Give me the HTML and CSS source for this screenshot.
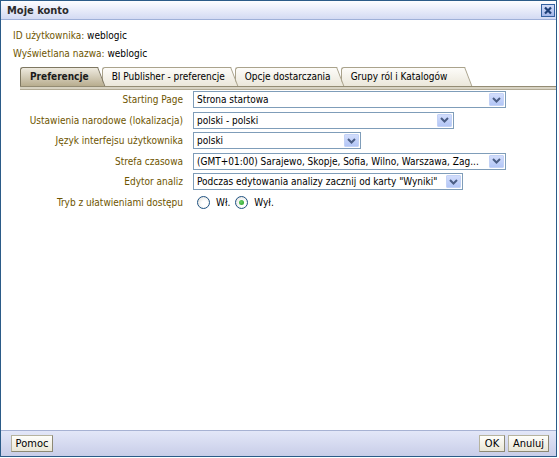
FILE: index.html
```html
<!DOCTYPE html>
<html lang="pl">
<head>
<meta charset="utf-8">
<title>Moje konto</title>
<link rel="stylesheet" href="styles.css">
</head>
<body>
<div class="window">
  <div class="titlebar">
    <span class="title">Moje konto</span>
    <span class="close"><svg width="12" height="11" viewBox="0 0 12 11"><path d="M3 2.5 L9 8.5 M9 2.5 L3 8.5" stroke="#1d3f78" stroke-width="2.2" fill="none"/></svg></span>
  </div>
  <div class="body">
    <div class="info">
      <div class="info-row"><span class="lbl">ID użytkownika:</span> <span class="val">weblogic</span></div>
      <div class="info-row"><span class="lbl">Wyświetlana nazwa:</span> <span class="val">weblogic</span></div>
    </div>
    <div class="tabs">
      <div class="tab tab-1 active">Preferencje</div>
      <div class="tab tab-2">BI Publisher - preferencje</div>
      <div class="tab tab-3">Opcje dostarczania</div>
      <div class="tab tab-4">Grupy ról i Katalogów</div>
    </div>
    <div class="tabline"></div>
    <div class="form">
      <label>Starting Page</label>
      <div class="select w-313"><span class="sel-text">Strona startowa</span><span class="arrow"><svg width="9" height="6" viewBox="0 0 9 6"><path d="M1 1 L4.5 4.5 L8 1" stroke="#4a5d84" stroke-width="2" fill="none"/></svg></span></div>

      <label>Ustawienia narodowe (lokalizacja)</label>
      <div class="select w-261"><span class="sel-text">polski - polski</span><span class="arrow"><svg width="9" height="6" viewBox="0 0 9 6"><path d="M1 1 L4.5 4.5 L8 1" stroke="#4a5d84" stroke-width="2" fill="none"/></svg></span></div>

      <label>Język interfejsu użytkownika</label>
      <div class="select w-168"><span class="sel-text">polski</span><span class="arrow"><svg width="9" height="6" viewBox="0 0 9 6"><path d="M1 1 L4.5 4.5 L8 1" stroke="#4a5d84" stroke-width="2" fill="none"/></svg></span></div>

      <label>Strefa czasowa</label>
      <div class="select w-313"><span class="sel-text">(GMT+01:00) Sarajewo, Skopje, Sofia, Wilno, Warszawa, Zag...</span><span class="arrow"><svg width="9" height="6" viewBox="0 0 9 6"><path d="M1 1 L4.5 4.5 L8 1" stroke="#4a5d84" stroke-width="2" fill="none"/></svg></span></div>

      <label>Edytor analiz</label>
      <div class="select w-270"><span class="sel-text">Podczas edytowania analizy zacznij od karty "Wyniki"</span><span class="arrow"><svg width="9" height="6" viewBox="0 0 9 6"><path d="M1 1 L4.5 4.5 L8 1" stroke="#4a5d84" stroke-width="2" fill="none"/></svg></span></div>

      <label class="radio-label">Tryb z ułatwieniami dostępu</label>
      <div class="radios">
        <span class="radio"></span><span class="radio-text">Wł.</span>
        <span class="radio checked"></span><span class="radio-text">Wył.</span>
      </div>
    </div>
  </div>
  <div class="footer">
    <button class="btn btn-help">Pomoc</button>
    <div class="footer-right">
      <button class="btn btn-ok">OK</button>
      <button class="btn btn-cancel">Anuluj</button>
    </div>
  </div>
</div>
</body>
</html>
```

FILE: styles.css
```css
* { box-sizing: border-box; }
html, body { margin: 0; background: #ffffff; }
body {
  font-family: "DejaVu Sans Condensed", "Liberation Sans", sans-serif;
  font-size: 10px;
  color: #000;
}
.window {
  width: 557px;
  height: 457px;
  border: 1px solid #2b5b88;
  display: flex;
  flex-direction: column;
  background: #fff;
}
.titlebar {
  flex: none;
  height: 19px;
  border-bottom: 1px solid #9fb0d8;
  background: linear-gradient(#fdfdff, #d3daf3);
  display: flex;
  align-items: center;
  justify-content: space-between;
  padding: 0 1px 0 6px;
}
.title { font-weight: bold; color: #2b2b2b; font-size: 11px; }
.close {
  width: 14px;
  height: 13px;
  border: 1px solid #3461a0;
  background: linear-gradient(#d3ddf8, #a3b6e8);
  display: flex;
  align-items: center;
  justify-content: center;
}
.close svg { display: block; }
.body { flex: 1; }
.info { padding: 7px 0 0 12px; }
.info-row { height: 18px; line-height: 18px; white-space: nowrap; }
.lbl { color: #6e5500; }

.tabs {
  display: flex;
  margin: 4px 0 0 19px;
  height: 19px;
}
.tab {
  position: relative;
  height: 19px;
  line-height: 19px;
  padding: 0 5px 0 10px;
  margin-right: 5px;
  white-space: nowrap;
  color: #000;
}
.tab::before {
  content: "";
  position: absolute;
  left: 0; right: 0; top: 0; bottom: 0;
  border-top: 1px solid #aaa38c;
  border-left: 1px solid #aaa38c;
  border-radius: 3px 0 0 0;
  background: linear-gradient(#fdfcf9, #ebe7da);
  z-index: -1;
}
.tab::after {
  content: "";
  position: absolute;
  top: 0; bottom: 0;
  left: calc(100% - 10px);
  width: 10px;
  border-top: 1px solid #aaa38c;
  border-right: 1px solid #aaa38c;
  background: linear-gradient(#fdfcf9, #ebe7da);
  transform: skewX(21deg);
  transform-origin: 0 0;
  z-index: -1;
}
.tab-1 { z-index: 5; padding-right: 8px; }
.tab-2 { z-index: 3; }
.tab-3 { z-index: 2; }
.tab-4 { z-index: 1; padding-right: 17px; }
.tab.active { font-weight: bold; color: #1a1a1a; }
.tab.active::before,
.tab.active::after {
  border-color: #7e7761;
  background: linear-gradient(#eeeadf, #b8ad8f);
}
.tabline {
  margin-left: 19px;
  height: 4px;
  border-top: 1px solid #948c74;
  border-bottom: 1px solid #b2ab96;
  background: #d8d3c3;
}

.form {
  display: grid;
  grid-template-columns: 182px 1fr;
  column-gap: 10px;
  row-gap: 3.5px;
  padding-top: 1px;
}
.form label {
  text-align: right;
  line-height: 17px;
  color: #6e5500;
  white-space: nowrap;
}
.form label.radio-label { line-height: 18px; }
.select {
  height: 17px;
  border: 1px solid #7f9db9;
  background: #fff;
  display: flex;
  align-items: center;
}
.w-313 { width: 313px; }
.w-261 { width: 261px; }
.w-168 { width: 168px; }
.w-270 { width: 270px; }
.sel-text {
  flex: 1;
  padding-left: 3px;
  white-space: nowrap;
  overflow: hidden;
}
.arrow {
  flex: none;
  width: 15px;
  height: 13px;
  margin-right: 1px;
  border: 1px solid #c3d2f6;
  border-radius: 1px;
  background: linear-gradient(#d2ddfc, #b3c6f6);
  display: flex;
  align-items: center;
  justify-content: center;
}
.arrow svg { display: block; }

.radios {
  height: 18px;
  display: flex;
  align-items: center;
  padding-left: 4px;
}
.radio {
  width: 13px;
  height: 13px;
  border: 1px solid #1f5282;
  border-radius: 50%;
  background: radial-gradient(circle at 60% 60%, #ffffff 30%, #dcdcd6 100%);
  display: flex;
  align-items: center;
  justify-content: center;
}
.radio.checked::after {
  content: "";
  width: 5px;
  height: 5px;
  border-radius: 50%;
  background: radial-gradient(circle at 40% 40%, #6ad16a, #219a21);
}
.radio-text { margin: 0 5px 0 6px; }

.footer {
  flex: none;
  height: 26px;
  border-top: 1px solid #a7b2d3;
  background: linear-gradient(#e3e7f8, #c8cde8);
  display: flex;
  align-items: center;
  justify-content: space-between;
  padding: 0 7px 0 10px;
}
.footer-right { display: flex; gap: 3px; }
.btn {
  font-family: "DejaVu Sans Condensed", "Liberation Sans", sans-serif;
  font-size: 11px;
  color: #000;
  height: 17px;
  padding: 0;
  margin: 0;
  border: 1px solid #b6b39e;
  border-right-color: #8d8974;
  border-bottom-color: #8d8974;
  border-radius: 0;
  background: linear-gradient(#fefefb, #e9e6d6);
  line-height: 15px;
  text-align: center;
}
.btn-help { width: 42px; }
.btn-ok { width: 26px; }
.btn-cancel { width: 41px; }
```
